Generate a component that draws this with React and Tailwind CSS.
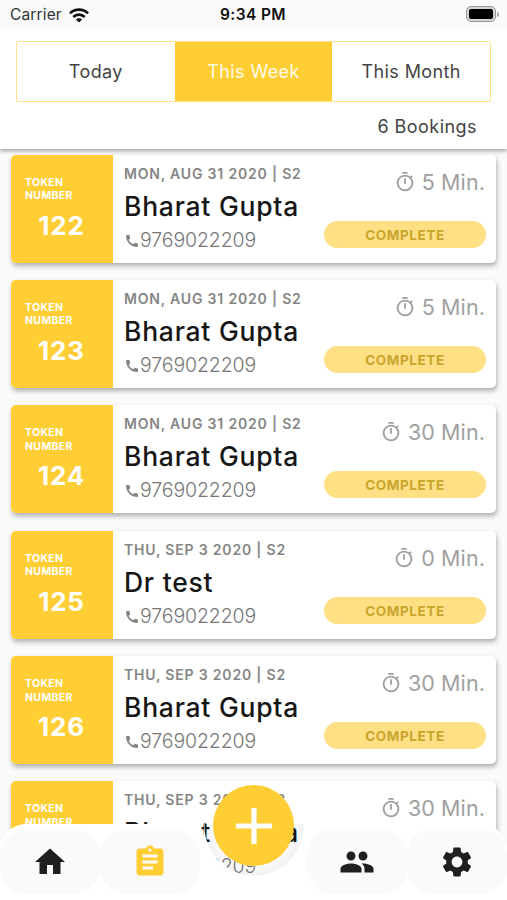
import React, { useState } from "react";
import {
  MdAdd,
  MdAssignment,
  MdCall,
  MdGroup,
  MdHome,
  MdOutlineTimer,
  MdSettings,
} from "react-icons/md";

const tabs = ["Today", "This Week", "This Month"];

const bookings = [
  { token: 122, date: "MON, AUG 31 2020 | S2", name: "Bharat Gupta", phone: "9769022209", minutes: 5 },
  { token: 123, date: "MON, AUG 31 2020 | S2", name: "Bharat Gupta", phone: "9769022209", minutes: 5 },
  { token: 124, date: "MON, AUG 31 2020 | S2", name: "Bharat Gupta", phone: "9769022209", minutes: 30 },
  { token: 125, date: "THU, SEP 3 2020 | S2", name: "Dr test", phone: "9769022209", minutes: 0 },
  { token: 126, date: "THU, SEP 3 2020 | S2", name: "Bharat Gupta", phone: "9769022209", minutes: 30 },
  { token: 127, date: "THU, SEP 3 2020 | S2", name: "Bharat Gupta", phone: "9769022209", minutes: 30 },
];

function StatusBar() {
  return (
    <div className="grid h-7 grid-cols-3 items-center bg-[#fafafa] pt-0.5 pr-2 pl-2.5">
      <div className="flex items-center gap-[7px] text-[15.5px] tracking-[0.15px] text-[#333]">
        Carrier
        <svg viewBox="0 0 20 15" className="h-[15px] w-5" fill="none" stroke="#111" strokeWidth="2.7">
          <path d="M1 5.4a12.8 12.8 0 0 1 18 0" />
          <path d="M4.3 9a8 8 0 0 1 11.4 0" />
          <path d="M10 14.6 6.9 11.5a4.4 4.4 0 0 1 6.2 0z" fill="#111" stroke="none" />
        </svg>
      </div>
      <div className="pr-[3px] text-center text-[15.5px] font-semibold tracking-[0.4px] whitespace-nowrap text-[#111]">
        9:34 PM
      </div>
      <div className="flex items-center justify-end gap-px pb-0.5">
        <div className="h-4 w-[30px] rounded-[5px] border border-[#999] bg-[#d5d5d5] p-[2px]">
          <div className="h-full rounded-[2px] bg-black" />
        </div>
        <div className="h-[5px] w-[2px] rounded-r-full bg-[#aaa]" />
      </div>
    </div>
  );
}

function BookingCard({ booking }) {
  return (
    <div className="flex h-[108px] shrink-0 overflow-hidden rounded-[5px] bg-white shadow-[1px_3px_5px_rgba(0,0,0,0.3)]">
      <div className="flex w-[102px] shrink-0 flex-col bg-[#ffce35] pt-[21px] text-white">
        <div className="pl-3.5 text-[10.5px] leading-[13.5px] font-bold tracking-[0.35px]">
          TOKEN
          <br />
          NUMBER
        </div>
        <div className="mt-[7px] pr-px text-center text-[26px] leading-8 font-bold tracking-[0.8px]">
          {booking.token}
        </div>
      </div>
      <div className="flex flex-1 flex-col pt-2.5 pl-[11px]">
        <div className="text-[14px] leading-[18px] font-semibold tracking-[0.82px] whitespace-nowrap text-[#858585]">
          {booking.date}
        </div>
        <div className="mt-[7px] text-[26.5px] leading-8 font-medium tracking-[0.75px] whitespace-nowrap text-[#161616]">
          {booking.name}
        </div>
        <div className="mt-1.5 flex items-center text-[19.5px] leading-6 font-light tracking-[-0.1px] text-[#777]">
          <MdCall className="mt-0.5 size-4 text-[#858585]" />
          {booking.phone}
        </div>
      </div>
      <div className="mr-[10px] flex w-[162px] shrink-0 flex-col pt-[13px]">
        <div className="flex items-center justify-end gap-1.5 pr-px text-[21.5px] leading-7 tracking-[0.1px] text-[#a0a0a0]">
          <MdOutlineTimer className="size-[22px]" />
          {booking.minutes} Min.
        </div>
        <div className="mt-[25px] h-[27px] rounded-full bg-[#ffe085] text-center text-[13.5px] leading-[28px] font-bold tracking-[0.6px] text-[#c9a52e]">
          COMPLETE
        </div>
      </div>
    </div>
  );
}

function NavItem({ icon: Icon, active }) {
  return (
    <button
      className={`flex h-[65px] w-[100px] items-center justify-center rounded-[26px] bg-[#fafafa] ${
        active ? "text-[#ffce35]" : "text-[#1f1f1f]"
      }`}
    >
      <Icon className="size-9" />
    </button>
  );
}

function App() {
  const [tab, setTab] = useState("This Week");

  return (
    <div className="relative flex h-[900px] w-[507px] flex-col overflow-hidden bg-[#fafafa] font-['Inter',sans-serif]">
      <div className="z-10 h-[149px] shrink-0 bg-white shadow-[0_2px_4px_rgba(0,0,0,0.35)]">
        <StatusBar />
        <div className="mr-4 ml-4 mt-[13px] grid h-[61px] grid-cols-3 rounded-[2px] border border-[#ffe28a]">
          {tabs.map((item) => (
            <button
              key={item}
              onClick={() => setTab(item)}
              className={`text-[18px] tracking-[0.4px] ${
                tab === item ? "bg-[#ffce35] text-[#fffbe8]" : "text-[#444]"
              }`}
            >
              {item}
            </button>
          ))}
        </div>
        <div className="mt-[11px] pr-[30px] text-right text-[18px] tracking-[0.45px] text-[#444]">
          {bookings.length} Bookings
        </div>
      </div>

      <div className="flex flex-1 flex-col gap-[17.4px] overflow-hidden px-[11px] pt-[5.5px]">
        {bookings.map((booking) => (
          <BookingCard key={booking.token} booking={booking} />
        ))}
      </div>

      {/* Bottom bar, cut out around the add button */}
      <div className="absolute inset-x-0 bottom-0 z-20 h-[76px]">
        <div className="absolute inset-0 flex">
          <div className="w-[204px] rounded-tl-[26px] rounded-tr-[14px] bg-white" />
          <div className="w-[100px] bg-[radial-gradient(circle_at_50px_2px,rgba(0,0,0,0.02)_40px,rgba(0,0,0,0.05)_49px,white_50px)]" />
          <div className="flex-1 rounded-tl-[14px] rounded-tr-[26px] bg-white" />
        </div>
        <div className="relative flex justify-between pt-[5px]">
          <div className="flex">
            <NavItem icon={MdHome} />
            <NavItem icon={MdAssignment} active />
          </div>
          <div className="flex">
            <NavItem icon={MdGroup} />
            <NavItem icon={MdSettings} />
          </div>
        </div>
      </div>
      <button className="absolute top-[785px] left-[213px] z-30 flex size-[81px] items-center justify-center rounded-full bg-[#ffce35] text-white">
        <MdAdd className="size-[62px]" />
      </button>
    </div>
  );
}

export default App;
